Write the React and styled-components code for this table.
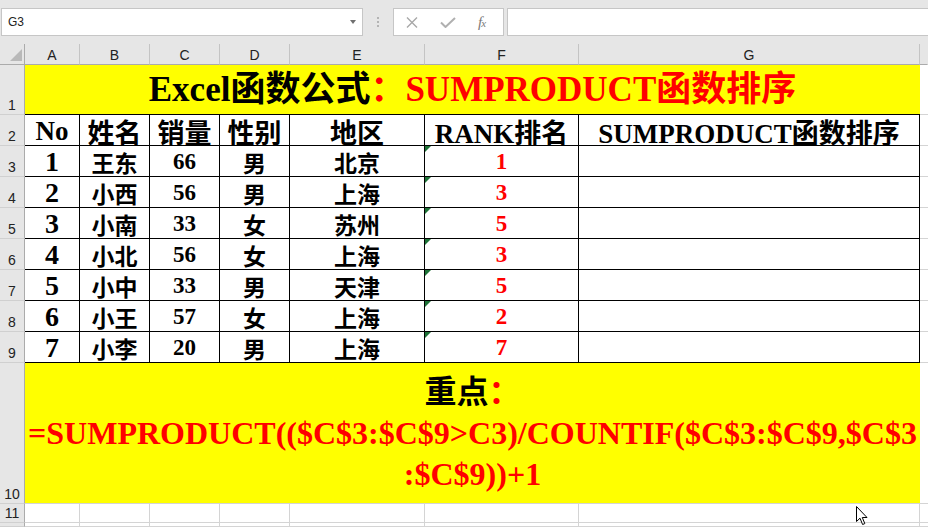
import React from "react"
import styled, { createGlobalStyle } from "styled-components"

const GlobalStyle = createGlobalStyle`
  html, body { margin: 0; padding: 0; background: #fff; }
  body { overflow: hidden; }
`

const SERIF = `"Liberation Serif", "Noto Sans CJK SC", serif`
const UI = `"Liberation Sans", Arial, sans-serif`

const rows = [
  [1, "王东", 66, "男", "北京", 1],
  [2, "小西", 56, "男", "上海", 3],
  [3, "小南", 33, "女", "苏州", 5],
  [4, "小北", 56, "女", "上海", 3],
  [5, "小中", 33, "男", "天津", 5],
  [6, "小王", 57, "女", "上海", 2],
  [7, "小李", 20, "男", "上海", 7],
]

const heads = ["No", "姓名", "销量", "性别", "地区", "RANK排名", "SUMPRODUCT函数排序"]
const letters = ["A", "B", "C", "D", "E", "F", "G", ""]

//---------------------------------------------------------

const Page = styled.div`
  width: 928px;
  height: 527px;
  overflow: hidden;
  position: relative;
  background: #e6e6e6;
  font-family: ${UI};
`

const Toolbar = styled.div`
  height: 44px;
  box-sizing: border-box;
  padding: 8px 0 0 1px;
  display: flex;
  align-items: flex-start;
`

const NameBox = styled.div`
  width: 362px;
  height: 28px;
  box-sizing: border-box;
  border: 1px solid #c6c6c6;
  background: #fff;
  display: flex;
  align-items: center;
  justify-content: space-between;
  padding: 0 6px 0 6px;
  font-size: 12px;
  color: #222;
`

const DropArrow = styled.span`
  width: 0;
  height: 0;
  border-left: 3.5px solid transparent;
  border-right: 3.5px solid transparent;
  border-top: 4px solid #707070;
`

const Grip = styled.div`
  width: 30px;
  height: 28px;
  display: flex;
  flex-direction: column;
  align-items: center;
  justify-content: center;
  gap: 2px;
  span {
    width: 2px;
    height: 2px;
    background: #b4b4b4;
  }
`

const FxBox = styled.div`
  width: 111px;
  height: 28px;
  box-sizing: border-box;
  border: 1px solid #c6c6c6;
  background: #fff;
  display: flex;
  align-items: center;
  padding-left: 12px;
  gap: 22px;
`

const FxLabel = styled.span`
  font-family: ${SERIF};
  font-style: italic;
  font-size: 15px;
  color: #7a7a7a;
  letter-spacing: -1px;
  small { font-size: 11px; }
`

const FormulaInput = styled.div`
  flex: 1;
  margin: 0 -4px 0 3px;
  height: 28px;
  box-sizing: border-box;
  border: 1px solid #c6c6c6;
  background: #fff;
`

const Sheet = styled.div`
  display: grid;
  grid-template-columns: 25px 55px 70px 70px 70px 135px 154px 341px 1fr;
  grid-template-rows: 21px 50px repeat(8, 31px) 141px 19px 1fr;
  height: 483px;
  background: #fff;
`

const Corner = styled.div`
  background: #e6e6e6;
  border-right: 1px solid #ababab;
  border-bottom: 1px solid #ababab;
  display: flex;
  align-items: flex-end;
  justify-content: flex-end;
  padding: 0 2px 3px 0;
  &::after {
    content: "";
    width: 0;
    height: 0;
    border-left: 12px solid transparent;
    border-bottom: 12px solid #b9b9b9;
  }
`

const ColHead = styled.div`
  background: #e6e6e6;
  border-right: 1px solid ${p => (p.$last ? "transparent" : "#c4c4c4")};
  border-bottom: 1px solid #ababab;
  display: flex;
  align-items: center;
  justify-content: center;
  padding-top: 2px;
  font-size: 14px;
  color: #222;
`

const RowHead = styled.div`
  background: #e6e6e6;
  border-right: 1px solid #ababab;
  border-bottom: 1px solid #d0d0d0;
  display: flex;
  align-items: flex-end;
  justify-content: center;
  font-size: 14px;
  line-height: 16px;
  color: #222;
  padding-bottom: 1px;
`

const Cell = styled.div`
  position: relative;
  border-right: 1px solid ${p => (p.$grid ? "#d4d4d4" : "#000")};
  border-bottom: 1px solid ${p => (p.$grid ? "#d4d4d4" : "#000")};
  display: flex;
  align-items: center;
  justify-content: center;
  padding-top: 2px;
  font-family: ${SERIF};
  font-weight: 700;
  font-size: ${p => p.$size || 23}px;
  color: ${p => (p.$red ? "#ff0000" : "#000")};
  white-space: nowrap;
`

const Spare = styled.div`
  border-bottom: 1px solid #d4d4d4;
`

const Banner = styled.div`
  grid-column: span 7;
  background: #ffff00;
  border-bottom: 1px solid ${p => (p.$line || "#000")};
  display: flex;
  flex-direction: column;
  align-items: center;
  justify-content: center;
  font-family: ${SERIF};
  font-weight: 700;
  font-size: ${p => p.$size}px;
  line-height: ${p => p.$lh || p.$size + 4}px;
  color: #000;
  white-space: nowrap;
`

const Red = styled.span`
  color: #ff0000;
`

const Flag = styled.span`
  position: absolute;
  left: 0;
  top: 0;
  width: 0;
  height: 0;
  border-top: 6px solid #1d7236;
  border-right: 6px solid transparent;
`

const Pointer = styled.svg`
  position: absolute;
  left: 856px;
  top: 506px;
`

//---------------------------------------------------------

function FormulaBar() {
  return (
    <Toolbar>
      <NameBox>
        G3
        <DropArrow />
      </NameBox>
      <Grip><span /><span /><span /></Grip>
      <FxBox>
        <svg width="12" height="11" viewBox="0 0 12 11">
          <path d="M1 0.5 L11 10.5 M11 0.5 L1 10.5" stroke="#a8a8a8" strokeWidth="1.4" fill="none" />
        </svg>
        <svg width="16" height="11" viewBox="0 0 16 11">
          <path d="M1 5.5 L5.5 10 L15 1" stroke="#b0b0b0" strokeWidth="2" fill="none" />
        </svg>
        <FxLabel>f<small>x</small></FxLabel>
      </FxBox>
      <FormulaInput />
    </Toolbar>
  )
}

function DataRow({ row, n }) {
  const [no, name, sales, sex, area, rank] = row
  return (
    <>
      <RowHead>{n}</RowHead>
      <Cell $size={28}>{no}</Cell>
      <Cell>{name}</Cell>
      <Cell>{sales}</Cell>
      <Cell>{sex}</Cell>
      <Cell>{area}</Cell>
      <Cell $red><Flag />{rank}</Cell>
      <Cell />
      <Spare />
    </>
  )
}

function GridRow({ n }) {
  return (
    <>
      <RowHead>{n}</RowHead>
      {letters.slice(0, 7).map((l, i) => <Cell key={i} $grid />)}
      <Spare />
    </>
  )
}

export default function App() {
  return (
    <Page>
      <GlobalStyle />
      <FormulaBar />
      <Sheet>
        <Corner />
        {letters.map((l, i) => <ColHead key={i} $last={i === 7}>{l}</ColHead>)}

        <RowHead>1</RowHead>
        <Banner $size={35} $line="#000">
          <div>Excel函数公式<Red>：SUMPRODUCT函数排序</Red></div>
        </Banner>
        <Spare />

        <RowHead>2</RowHead>
        {heads.map((h, i) => <Cell key={i} $size={27}>{h}</Cell>)}
        <Spare />

        {rows.map((r, i) => <DataRow key={i} row={r} n={i + 3} />)}

        <RowHead>10</RowHead>
        <Banner $size={32} $lh={41} $line="#d4d4d4">
          <div>重点<Red>：</Red></div>
          <Red>=SUMPRODUCT(($C$3:$C$9&gt;C3)/COUNTIF($C$3:$C$9,$C$3</Red>
          <Red>:$C$9))+1</Red>
        </Banner>
        <Spare />

        <GridRow n={11} />
        <GridRow n="" />
      </Sheet>
      <Pointer width="13" height="20" viewBox="0 0 13 20">
        <path d="M0.5 0.5 L0.5 15.5 L4 12.2 L6.6 18.5 L8.8 17.6 L6.3 11.5 L11 11.5 Z" fill="#fff" stroke="#000" strokeWidth="1" />
      </Pointer>
    </Page>
  )
}
